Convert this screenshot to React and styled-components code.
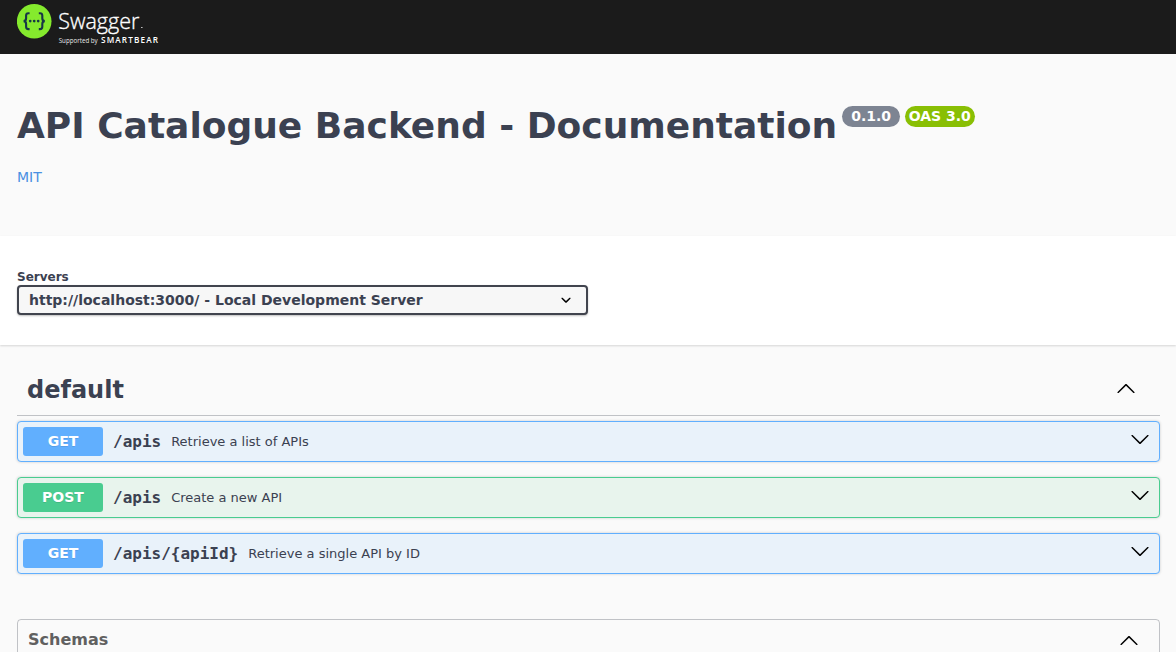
import React from 'react';
import styled, { createGlobalStyle } from 'styled-components';

const Global = createGlobalStyle`
  *, *::before, *::after { box-sizing: border-box; }
  html { overflow: hidden; }
  body {
    margin: 0;
    background: #fafafa;
    color: #3b4151;
    font-family: "DejaVu Sans", sans-serif;
  }
  #root { height: 652px; overflow: hidden; }
`;

const Topbar = styled.header`
  height: 54px;
  padding: 0 17px;
  background: #1b1b1b;
`;

const LogoSvg = styled.svg`
  display: block;
  font-family: "Open Sans", sans-serif;
`;

const Info = styled.section`
  height: 182px;
  padding: 50px 17px 0;
`;

const TitleRow = styled.div`
  display: flex;
  align-items: flex-start;
  height: 42px;
`;

const Title = styled.h2`
  margin: 0;
  font-size: 36px;
  line-height: 44px;
  white-space: nowrap;
`;

const Badges = styled.div`
  display: flex;
  gap: 5px;
  margin: 2px 0 0 5px;
`;

const Badge = styled.span`
  width: ${(p) => p.$width}px;
  height: 21px;
  padding-left: ${(p) => p.$inset}px;
  border-radius: 57px;
  background: ${(p) => p.$color};
  color: #fff;
  font-size: 14px;
  font-weight: 700;
  line-height: 20px;
  white-space: nowrap;
`;

const License = styled.a`
  display: block;
  width: max-content;
  margin-top: 23px;
  color: #4990e2;
  font-size: 14px;
  line-height: 16px;
`;

const SchemeBar = styled.section`
  height: 109px;
  padding: 34px 17px 0;
  background: #fff;
  box-shadow: 0 1px 2px rgba(0, 0, 0, 0.15);
`;

const ServersLabel = styled.div`
  font-size: 12px;
  font-weight: 700;
  line-height: 15px;
`;

const ServerSelect = styled.div`
  display: flex;
  align-items: center;
  justify-content: space-between;
  width: 571px;
  height: 30px;
  padding: 0 10px;
  border: 2px solid #41444e;
  border-radius: 4px;
  background: #f7f7f7;
  box-shadow: 0 1px 2px rgba(0, 0, 0, 0.25);
  font-size: 14px;
  font-weight: 700;
  line-height: 26px;
`;

const SelectArrow = styled.svg`
  width: 20px;
  height: 20px;
`;

const Operations = styled.main`
  padding: 16px 16px 0 17px;
`;

const ArrowSvg = styled.svg`
  flex: none;
  width: 20px;
  height: 20px;
  fill: #000;
`;

const TagHeader = styled.h3`
  display: flex;
  align-items: flex-start;
  justify-content: space-between;
  height: 55px;
  margin: 0 0 5px;
  padding: 15px 24px 0 10px;
  border-bottom: 1px solid rgba(59, 65, 81, 0.3);
  font-size: 24px;
  line-height: 28px;

  ${ArrowSvg} {
    margin-top: 2px;
  }
`;

const Block = styled.div`
  display: flex;
  align-items: center;
  height: 41px;
  margin-bottom: 15px;
  padding: 0 9px 0 5px;
  border: 1px solid ${(p) => p.$color};
  border-radius: 4px;
  background: ${(p) => p.$tint};
  box-shadow: 0 0 3px rgba(0, 0, 0, 0.19);

  ${ArrowSvg} {
    margin: 0 0 5px auto;
  }
`;

const Method = styled.span`
  width: 80px;
  height: 29px;
  border-radius: 3px;
  background: ${(p) => p.$color};
  color: #fff;
  font-size: 14px;
  font-weight: 700;
  line-height: 28px;
  text-align: center;
  text-shadow: 0 1px 0 rgba(0, 0, 0, 0.1);
`;

const Path = styled.span`
  padding: 0 10px;
  font-family: "DejaVu Sans Mono", monospace;
  font-size: 16px;
  font-weight: 700;
`;

const Summary = styled.span`
  font-size: 13px;
`;

const Schemas = styled.section`
  height: 60px;
  margin: 45px 16px 0 17px;
  border: 1px solid rgba(59, 65, 81, 0.3);
  border-radius: 4px;
`;

const SchemasHeader = styled.h4`
  display: flex;
  align-items: center;
  justify-content: space-between;
  height: 38px;
  margin: 0;
  padding: 0 20px 0 10px;
  color: #606060;
  font-size: 16px;

  ${ArrowSvg} {
    margin-top: 2px;
  }
`;

const UP =
  'M17.418 14.908c.272.268.709.268.979 0s.271-.701 0-.969l-7.908-7.83c-.27-.268-.707-.268-.979 0l-7.908 7.83c-.27.268-.27.701 0 .969.271.268.709.268.979 0L10 7.767l7.418 7.141z';
const DOWN =
  'M17.418 6.109c.272-.268.709-.268.979 0s.271.701 0 .969l-7.908 7.83c-.27.268-.707.268-.979 0l-7.908-7.83c-.27-.268-.27-.701 0-.969.271-.268.709-.268.979 0L10 13.25l7.418-7.141z';

const Arrow = ({ up }) => (
  <ArrowSvg viewBox="0 0 20 20">
    <path d={up ? UP : DOWN} />
  </ArrowSvg>
);

const Logo = () => (
  <LogoSvg width="150" height="54" viewBox="17 0 150 54">
    <circle cx="34.2" cy="21.3" r="17.3" fill="#85ea2d" />
    <g fill="none" stroke="#173647" strokeWidth="2.1">
      <path d="M29.6 13.2h-1.2q-2.3 0-2.3 2.3v2.7q0 2.8-2.5 2.9 2.5.1 2.5 2.9v2.8q0 2.3 2.3 2.3h1.2" />
      <path d="M38.8 13.2h1.2q2.3 0 2.3 2.3v2.7q0 2.8 2.5 2.9-2.5.1-2.5 2.9v2.8q0 2.3-2.3 2.3h-1.2" />
    </g>
    <g fill="#173647">
      <circle cx="30.2" cy="21.1" r="1.35" />
      <circle cx="34.2" cy="21.1" r="1.35" />
      <circle cx="38.2" cy="21.1" r="1.35" />
    </g>
    <g fill="#fff">
      <text x="58.3" y="28.6" fontSize="22.4" fontWeight="300" stroke="#fff" strokeWidth="0.35" textLength="81" lengthAdjust="spacingAndGlyphs">Swagger</text>
      <rect x="141" y="27" width="1.6" height="1" opacity="0.7" />
      <text x="58.7" y="42.6" fontSize="6.4" opacity="0.9" textLength="39" lengthAdjust="spacingAndGlyphs">Supported by</text>
      <text x="101" y="42.8" fontSize="8.2" fontWeight="600" textLength="57">SMARTBEAR</text>
    </g>
  </LogoSvg>
);

const METHODS = {
  GET: { color: '#61affe', tint: '#e9f2fa' },
  POST: { color: '#49cc90', tint: '#e8f4ed' },
};

const OPERATIONS = [
  { method: 'GET', path: '/apis', summary: 'Retrieve a list of APIs' },
  { method: 'POST', path: '/apis', summary: 'Create a new API' },
  { method: 'GET', path: '/apis/{apiId}', summary: 'Retrieve a single API by ID' },
];

export default function App() {
  return (
    <>
      <Global />
      <Topbar>
        <Logo />
      </Topbar>
      <Info>
        <TitleRow>
          <Title>API Catalogue Backend - Documentation</Title>
          <Badges>
            <Badge $width={58} $inset={9} $color="#7d8492">0.1.0</Badge>
            <Badge $width={70} $inset={3.5} $color="#89bf04">OAS 3.0</Badge>
          </Badges>
        </TitleRow>
        <License>MIT</License>
      </Info>
      <SchemeBar>
        <ServersLabel>Servers</ServersLabel>
        <ServerSelect>
          http://localhost:3000/ - Local Development Server
          <SelectArrow viewBox="0 0 20 20">
            <path
              d="M13.418 7.859c.271-.268.709-.268.978 0s.272.701 0 .969l-3.908 3.83c-.27.268-.707.268-.979 0l-3.908-3.83c-.27-.267-.27-.701 0-.969.271-.268.709-.268.978 0L10 11l3.418-3.141z"
            />
          </SelectArrow>
        </ServerSelect>
      </SchemeBar>
      <Operations>
        <TagHeader>
          default
          <Arrow up />
        </TagHeader>
        {OPERATIONS.map((op) => (
          <Block key={op.method + op.path} $color={METHODS[op.method].color} $tint={METHODS[op.method].tint}>
            <Method $color={METHODS[op.method].color}>{op.method}</Method>
            <Path>{op.path}</Path>
            <Summary>{op.summary}</Summary>
            <Arrow />
          </Block>
        ))}
      </Operations>
      <Schemas>
        <SchemasHeader>
          Schemas
          <Arrow up />
        </SchemasHeader>
      </Schemas>
    </>
  );
}
